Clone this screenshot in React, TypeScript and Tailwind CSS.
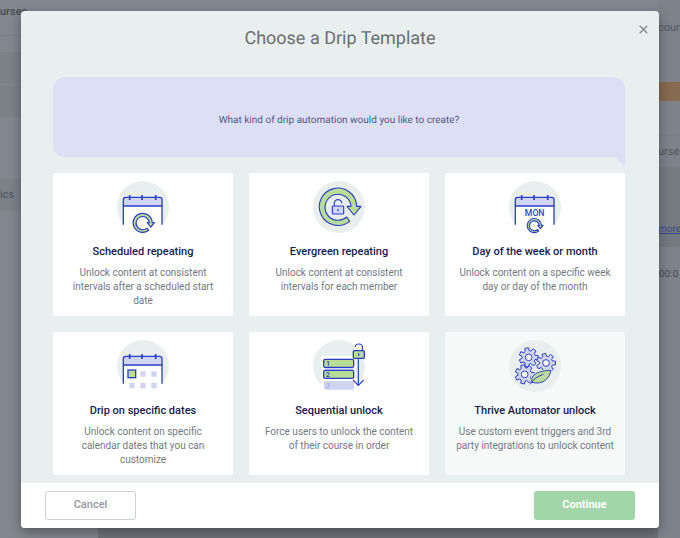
// Drip template picker shown over the course editor

import type { ReactNode } from 'react';
import { X } from 'lucide-react';

const BLUE = '#2a3fc9';
const GREEN = '#b9dd94';
const LAVENDER = '#cfd5f3';

function IconFrame({ children }: { children: ReactNode }) {
  return (
    <svg viewBox="0 0 156 156" className="size-[52px] overflow-visible" aria-hidden="true">
      <circle cx="78" cy="78" r="78" fill="#e9efee" />
      {children}
    </svg>
  );
}

function Calendar() {
  return (
    <g fill="none" stroke={BLUE} strokeWidth="4">
      <path d="M19 49H135V158H19Z" fill="#fff" stroke="none" />
      <path d="M19 75V56Q19 49 26 49H128Q135 49 135 56V75Z" fill={LAVENDER} />
      <path d="M19 74V131M135 74V131" />
      <path d="M38 42V57M75 42V57M116 42V57" strokeWidth="5" />
    </g>
  );
}

function RepeatArrow({ x, y, scale }: { x: number; y: number; scale: number }) {
  return (
    <path
      transform={`translate(${x} ${y}) scale(${scale})`}
      d="M35 43A56 56 0 1 1 56 -2H69L48 24L27 -2H39A39 39 0 1 0 26 30Z"
      fill={GREEN}
      stroke={BLUE}
      strokeWidth={3.4 / scale}
      strokeLinejoin="round"
    />
  );
}

// Seven-tooth outline around the gear's centre
const gearPoints = Array.from({ length: 7 }, (_, i) => {
  const base = (i * Math.PI * 2) / 7;
  return [
    [-0.32, 20],
    [-0.19, 29],
    [0.19, 29],
    [0.32, 20],
  ]
    .map(([a, r]) => `${(Math.cos(base + a) * r).toFixed(1)},${(Math.sin(base + a) * r).toFixed(1)}`)
    .join(' ');
}).join(' ');

function Gear({ x, y }: { x: number; y: number }) {
  return (
    <g transform={`translate(${x} ${y})`} stroke={BLUE} strokeWidth="3" strokeLinejoin="round">
      <polygon points={gearPoints} fill={LAVENDER} />
      <circle r="10" fill="#fff" />
    </g>
  );
}

function ScheduledIcon() {
  return (
    <IconFrame>
      <Calendar />
      <RepeatArrow x={77} y={126} scale={0.51} />
    </IconFrame>
  );
}

function EvergreenIcon() {
  return (
    <IconFrame>
      <RepeatArrow x={75} y={78} scale={1} />
      <g fill="none" stroke={BLUE} strokeWidth="3.5">
        <path d="M64 75V67A11 11 0 0 1 86 67" />
        <rect x="58" y="75" width="34" height="24" rx="2" fill={LAVENDER} />
        <path d="M75 84V91" />
      </g>
    </IconFrame>
  );
}

function DayIcon() {
  return (
    <IconFrame>
      <Calendar />
      <text x="77" y="105" textAnchor="middle" fontSize="26" fontWeight="500" fill={BLUE} className="font-['Roboto',sans-serif]">
        MON
      </text>
      <RepeatArrow x={76} y={134} scale={0.38} />
    </IconFrame>
  );
}

function DatesIcon() {
  return (
    <IconFrame>
      <Calendar />
      <rect x="33" y="90" width="23" height="23" fill={GREEN} stroke={BLUE} strokeWidth="4" />
      <g fill={LAVENDER}>
        <rect x="70" y="94" width="16" height="16" />
        <rect x="103" y="94" width="16" height="16" />
        <rect x="37" y="129" width="16" height="16" />
        <rect x="70" y="129" width="16" height="16" />
        <rect x="103" y="129" width="16" height="16" />
      </g>
    </IconFrame>
  );
}

function SequentialIcon() {
  return (
    <IconFrame>
      <path d="M24 54Q24 48 30 48H129V158H24Z" fill="#fff" />
      <path d="M36 80H121V95H36Z" fill={LAVENDER} />
      <g stroke={BLUE} strokeWidth="4">
        <rect x="32" y="58" width="90" height="24" rx="4" fill={GREEN} />
        <rect x="32" y="91" width="90" height="24" rx="4" fill={GREEN} />
      </g>
      <rect x="33" y="123" width="90" height="26" rx="4" fill={LAVENDER} />
      <g fontSize="22" fontWeight="500" fill={BLUE} className="font-['Roboto',sans-serif]">
        <text x="39" y="78">1</text>
        <text x="38" y="111">2</text>
        <text x="38" y="144" fill="#a3aeea">3</text>
      </g>
      <g fill="none" stroke={BLUE} strokeWidth="3.5">
        <path d="M136 58V135M120 120L136 136L152 120" />
        <path d="M127 21A10.500 9 0 0 1 148 21V31" />
        <rect x="121" y="32" width="33" height="23" rx="3" fill={GREEN} strokeWidth="4" />
        <path d="M137 40V48" />
      </g>
    </IconFrame>
  );
}

function AutomatorIcon() {
  return (
    <IconFrame>
      <Gear x={59} y={52} />
      <Gear x={111} y={69} />
      <Gear x={47} y={103} />
      <g stroke={BLUE} strokeWidth="3" strokeLinejoin="round" strokeLinecap="round">
        <path d="M69 127C63 102 90 92 126 91C122 113 103 137 69 127Z" fill="#e9efee" stroke="#e9efee" strokeWidth="8" />
        <path d="M69 127C63 102 90 92 126 91C122 113 103 137 69 127Z" fill={GREEN} />
        <path d="M64 132C72 118 84 110 102 103" fill="none" />
      </g>
    </IconFrame>
  );
}

const templates = [
  {
    title: 'Scheduled repeating',
    description: 'Unlock content at consistent intervals after a scheduled start date',
    icon: <ScheduledIcon />,
  },
  {
    title: 'Evergreen repeating',
    description: 'Unlock content at consistent intervals for each member',
    icon: <EvergreenIcon />,
  },
  {
    title: 'Day of the week or month',
    description: 'Unlock content on a specific week day or day of the month',
    icon: <DayIcon />,
  },
  {
    title: 'Drip on specific dates',
    description: 'Unlock content on specific calendar dates that you can customize',
    icon: <DatesIcon />,
  },
  {
    title: 'Sequential unlock',
    description: 'Force users to unlock the content of their course in order',
    icon: <SequentialIcon />,
  },
  {
    title: 'Thrive Automator unlock',
    description: 'Use custom event triggers and 3rd party integrations to unlock content',
    icon: <AutomatorIcon />,
    disabled: true,
  },
];

function PageBehind() {
  return (
    <div className="absolute inset-0 flex justify-between overflow-hidden text-[11px] leading-4 text-[#555962]" aria-hidden="true">
      <div className="w-[98px]">
        <div className="h-9 border-b border-[#7c8088] pt-1 font-medium text-[#484c55]">urses</div>
        <div className="mt-4 h-8 bg-[#7c8088]" />
        <div className="mt-px h-8 bg-[#7c8088]" />
        <div className="mt-[62px] h-8 bg-[#7c8088] py-2 font-medium">ics</div>
      </div>
      <div className="h-4 flex-1 self-end bg-[#6f7379]" />
      <div className="w-[22px] bg-[#7e828a]">
        <div className="h-[82px] pt-5">cour</div>
        <div className="h-[19px] bg-[#876b50]" />
        <div className="mt-[34px] h-8 border-t border-[#7a7e86] pt-2">urse</div>
        <div className="h-20 bg-[#757a81] pt-[55px] text-[10px] text-[#3d4a8c] underline">more</div>
        <div className="h-12 py-5 pl-px text-[10px] text-[#484c55]">00:0</div>
      </div>
    </div>
  );
}

export default function App() {
  return (
    <div className="relative min-h-screen bg-[#82868e] px-[21px] pt-[11px] pb-[10px] font-['Roboto',sans-serif] [text-rendering:geometricPrecision]">
      <PageBehind />
      <div
        role="dialog"
        aria-labelledby="dialog-title"
        className="relative overflow-hidden rounded bg-[#e9efee] shadow-[0_4px_12px_rgba(0,0,0,0.35)]"
      >
        <button type="button" aria-label="Close" className="absolute top-3 right-[9px] text-[#8a8f94]">
          <X className="size-[13px]" strokeWidth={3} />
        </button>

        <h1 id="dialog-title" className="pt-[14px] pb-6 text-center text-[18px] leading-7 text-[#6a6e74]">
          Choose a Drip Template
        </h1>

        <div className="pr-[34px] pb-2 pl-8">
          <div className="relative mb-4 flex h-20 items-center justify-center rounded-xl rounded-br-none bg-[#dddff7] pt-[6px] text-[10px] text-[#50597f]">
            What kind of drip automation would you like to create?
            <svg viewBox="0 0 10 10" className="absolute top-full right-0 size-[10px]" aria-hidden="true">
              <path d="M0 0H10V10Z" fill="#dddff7" />
            </svg>
          </div>

          <div className="grid grid-cols-3 gap-4">
            {templates.map((template) => (
              <button
                key={template.title}
                type="button"
                disabled={template.disabled}
                className={`flex min-h-[143px] flex-col items-center rounded-xs px-[11px] pt-2 pb-[6px] text-center ${
                  template.disabled ? 'bg-[#f7f9f9]' : 'bg-white'
                }`}
              >
                {template.icon}
                <span className="mt-[11px] text-[11px] leading-4 font-medium text-[#17214d]">{template.title}</span>
                <span className="mt-[6px] text-[10px] leading-[14px] text-[#727982]">{template.description}</span>
              </button>
            ))}
          </div>
        </div>

        <div className="flex justify-between bg-white px-6 py-2 text-[11px] font-medium">
          <button type="button" className="h-[29px] w-[91px] rounded-[3px] border border-[#cdd1d3] text-[#9398a3]">
            Cancel
          </button>
          <button type="button" className="h-[29px] w-[101px] rounded-[3px] bg-[#a2d6a9] font-bold text-white">
            Continue
          </button>
        </div>
      </div>
    </div>
  );
}
